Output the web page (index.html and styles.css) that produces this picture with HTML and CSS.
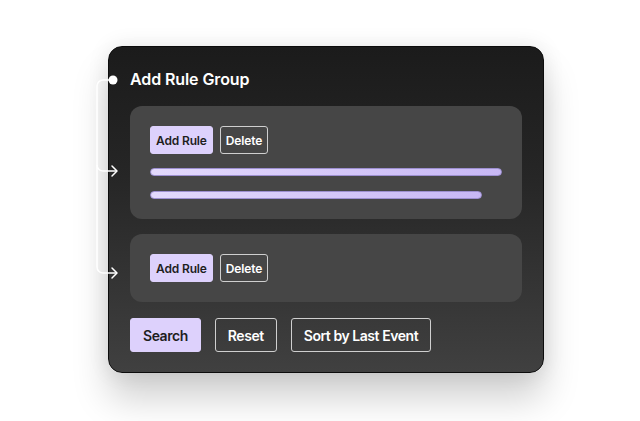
FILE: index.html
```html
<!DOCTYPE html>
<html>
<head>
<meta charset="utf-8">
<link rel="stylesheet" href="styles.css">
</head>
<body>
<div class="stage">
  <div class="card">
    <div class="title">Add Rule Group</div>
    <div class="groups">
      <div class="panel">
        <div class="row">
          <button class="btn-sm primary">Add Rule</button>
          <button class="btn-sm outline">Delete</button>
        </div>
        <div class="bars">
          <div class="bar" style="width:352px"></div>
          <div class="bar" style="width:332px"></div>
        </div>
      </div>
      <div class="panel">
        <div class="row">
          <button class="btn-sm primary">Add Rule</button>
          <button class="btn-sm outline">Delete</button>
        </div>
      </div>
    </div>
    <div class="actions">
      <button class="btn primary">Search</button>
      <button class="btn outline">Reset</button>
      <button class="btn outline">Sort by Last Event</button>
    </div>
  </div>
  <svg class="connector" width="44" height="220" viewBox="0 0 44 220">
    <circle cx="25" cy="13" r="4.5" fill="#fff"/>
    <path d="M25 13 H15 A6 6 0 0 0 9 19 V200 A6 6 0 0 0 15 206 H29" fill="none" stroke="#fff" stroke-width="1.5"/>
    <path d="M9 98 A6 6 0 0 0 15 104 H29" fill="none" stroke="#fff" stroke-width="1.5"/>
    <path d="M24 99 L29 104 L24 109" fill="none" stroke="#fff" stroke-width="1.5" stroke-linecap="round" stroke-linejoin="round"/>
    <path d="M24 201 L29 206 L24 211" fill="none" stroke="#fff" stroke-width="1.5" stroke-linecap="round" stroke-linejoin="round"/>
  </svg>
</div>
</body>
</html>
```
FILE: styles.css
```css
html, body {
  margin: 0;
  padding: 0;
  background: #ffffff;
  font-family: Inter, "Noto Sans", sans-serif;
}
body {
  min-height: 421px;
  overflow: hidden;
}
.stage {
  position: relative;
  width: 436px;
  margin: 46px 0 0 108px;
}
.card {
  box-sizing: border-box;
  width: 436px;
  height: 327px;
  border: 1px solid #0c0c0c;
  border-radius: 14px;
  background: linear-gradient(to bottom, #1b1b1b 0%, #262626 40%, #404040 100%);
  box-shadow: 0 26px 36px rgba(0, 0, 0, 0.18), 0 0 22px rgba(0, 0, 0, 0.09);
  padding: 22px 21px 20px 21px;
  display: flex;
  flex-direction: column;
}
.title {
  color: #ffffff;
  font-size: 16px;
  font-weight: 600;
  line-height: 20px;
  letter-spacing: -0.1px;
}
.groups {
  margin-top: 17px;
  display: flex;
  flex-direction: column;
  gap: 15px;
}
.panel {
  background: #464646;
  border-radius: 12px;
  padding: 20px;
}
.row {
  display: flex;
  gap: 7px;
}
button {
  font-family: inherit;
  cursor: pointer;
  box-sizing: border-box;
  margin: 0;
}
.btn-sm {
  height: 28px;
  padding: 0 5px;
  font-size: 12px;
  font-weight: 600;
  border-radius: 3px;
  letter-spacing: -0.15px;
}
.primary {
  background: #ddd1fc;
  border: 1px solid #ddd1fc;
  color: #1e1e1e;
}
.outline {
  background: transparent;
  border: 1px solid #cfcfcf;
  color: #ffffff;
}
.bars {
  margin-top: 14px;
  display: flex;
  flex-direction: column;
  gap: 15px;
}
.bar {
  height: 8px;
  box-sizing: border-box;
  border-radius: 4px;
  background: linear-gradient(to right, #e3d9fc, #c8b8f5);
  border: 1px solid #9d8fd0;
}
.actions {
  margin-top: 16px;
  display: flex;
  gap: 14px;
}
.btn {
  height: 34px;
  padding: 0 12px;
  font-size: 14px;
  font-weight: 600;
  border-radius: 3px;
  letter-spacing: -0.45px;
}
.connector {
  position: absolute;
  left: -20px;
  top: 21px;
}
```
